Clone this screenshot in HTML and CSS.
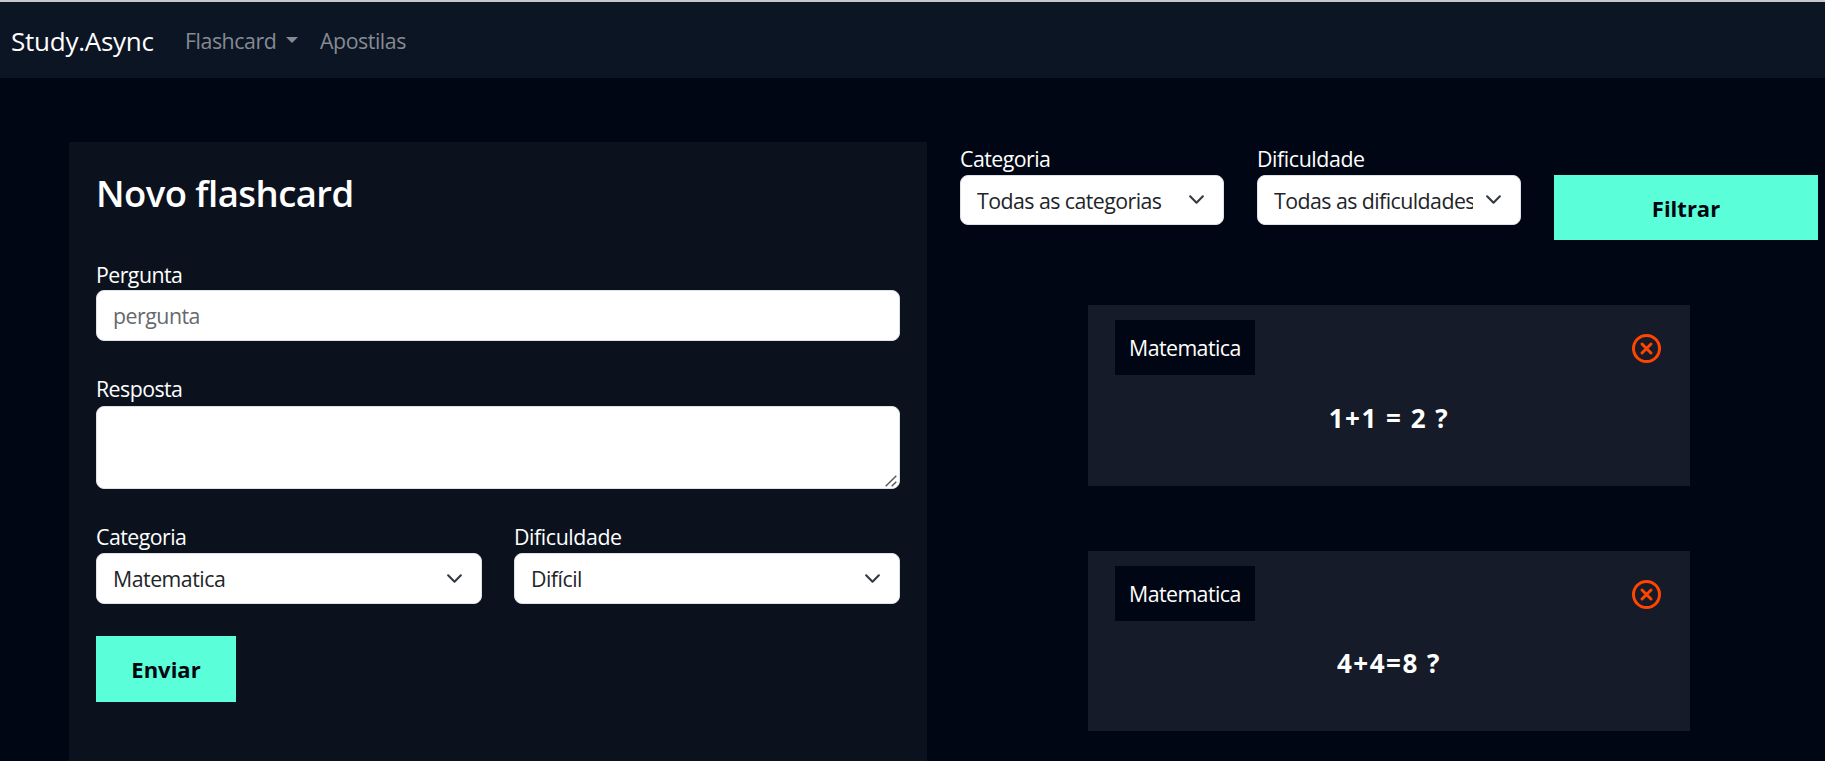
FILE: index.html
```html
<!DOCTYPE html>
<html lang="pt-BR">
<head>
<meta charset="utf-8">
<title>Study.Async</title>
<link rel="stylesheet" href="styles.css">
</head>
<body>
<nav class="navbar">
  <a class="brand"><span>Study.Async</span></a>
  <a class="nav-link flash"><span>Flashcard</span><i class="caret"></i></a>
  <a class="nav-link"><span>Apostilas</span></a>
</nav>
<main class="layout">
  <form class="panel">
    <h2 class="title">Novo flashcard</h2>
    <div class="field question">
      <label class="label">Pergunta</label>
      <input class="control" placeholder="pergunta">
    </div>
    <div class="field answer">
      <label class="label">Resposta</label>
      <div class="control area"><svg class="grip" width="12" height="12" viewBox="0 0 12 12"><path d="M.7 11.3 11.3.7M6.7 11.3l4.6-4.6"/></svg></div>
    </div>
    <div class="pair">
      <div class="field">
        <label class="label">Categoria</label>
        <div class="control select"><span class="value mat">Matematica</span><svg class="chevron" viewBox="0 0 16 16"><path d="m2 5 6 6 6-6"/></svg></div>
      </div>
      <div class="field">
        <label class="label dif">Dificuldade</label>
        <div class="control select"><span class="value">Difícil</span><svg class="chevron" viewBox="0 0 16 16"><path d="m2 5 6 6 6-6"/></svg></div>
      </div>
    </div>
    <button class="btn send" type="button">Enviar</button>
  </form>
  <section class="side">
    <form class="filters">
      <div class="field">
        <label class="label">Categoria</label>
        <div class="control select short"><span class="value all">Todas as categorias</span><svg class="chevron" viewBox="0 0 16 16"><path d="m2 5 6 6 6-6"/></svg></div>
      </div>
      <div class="field">
        <label class="label dif">Dificuldade</label>
        <div class="control select short"><span class="value all">Todas as dificuldades</span><svg class="chevron" viewBox="0 0 16 16"><path d="m2 5 6 6 6-6"/></svg></div>
      </div>
      <button class="btn filter" type="button">Filtrar</button>
    </form>
    <div class="cards">
      <article class="card">
        <div class="card-head"><span class="badge">Matematica</span>
          <svg class="remove" viewBox="0 0 29 29"><circle cx="14.5" cy="14.5" r="13"/><path d="m10 10 9 9m0-9-9 9"/></svg></div>
        <p class="ask">1+1 = 2 ?</p>
      </article>
      <article class="card second">
        <div class="card-head"><span class="badge">Matematica</span>
          <svg class="remove" viewBox="0 0 29 29"><circle cx="14.5" cy="14.5" r="13"/><path d="m10 10 9 9m0-9-9 9"/></svg></div>
        <p class="ask">4+4=8 ?</p>
      </article>
    </div>
  </section>
</main>
</body>
</html>
```
FILE: styles.css
```css
* { box-sizing: border-box; }
html, body { height: 100%; }
body {
  margin: 0;
  background: #000614;
  color: #fff;
  font: 400 21.33px/32px "Open Sans", "Noto Sans", sans-serif;
  overflow: hidden;
}
.navbar {
  display: flex;
  align-items: center;
  height: 78px;
  padding: 2px 0 0 11px;
  border-top: 2px solid #c8c8cc;
  background: #0c1524;
}
.brand { width: 174px; font-size: 26px; letter-spacing: -0.25px; }
.nav-link { color: #868a92; letter-spacing: -0.45px; }
.flash { display: flex; align-items: center; width: 135px; }
.caret {
  margin: -3px 0 0 10px;
  border: 6px solid transparent;
  border-top-color: currentColor;
  border-bottom: 0;
}
.layout { display: flex; gap: 33px; padding: 64px 0 0 69px; }
.panel { width: 858px; height: 640px; padding: 27px; background: #0b121e; }
.title { margin: 0 0 42px; font-size: 36.5px; font-weight: 600; line-height: 48px; letter-spacing: -0.55px; }
.field { min-width: 0; }
.label { display: block; height: 32px; line-height: 32px; letter-spacing: -0.55px; white-space: nowrap; }
.dif { letter-spacing: -0.4px; }
.question { margin-bottom: 32px; }
.question .label { margin-bottom: -1px; }
.answer { margin-bottom: 32px; }
.answer .label { height: 33px; }
.control {
  display: block;
  width: 100%;
  height: 51px;
  padding: 0 16px;
  border: 1px solid #dee2e6;
  border-radius: 8px;
  background: #fff;
  color: #212529;
  font: inherit;
  letter-spacing: -0.5px;
}
.control::placeholder { color: #65696d; opacity: 1; }
.area { display: flex; align-items: flex-end; justify-content: flex-end; height: 83px; padding: 0 2px 1px 0; }
.grip { fill: none; stroke: #555; stroke-width: 1.4; }
.pair { display: grid; grid-template-columns: 386px 386px; gap: 32px; }
.select { display: flex; align-items: center; justify-content: space-between; padding: 1px 18px 0 16px; }
.short { height: 50px; padding-top: 2px; }
.value { overflow: hidden; white-space: nowrap; }
.all { width: 199px; letter-spacing: -0.55px; }
.chevron { flex: none; width: 17px; height: 17px; margin-top: -2px; fill: none; stroke: #343a40; stroke-width: 2; stroke-linecap: round; stroke-linejoin: round; }
.short .chevron { margin-top: -3px; }
.btn {
  border: 0;
  padding: 0;
  background: #5affd9;
  color: #000610;
  font: 700 22px/32px "Open Sans", "Noto Sans", sans-serif;
}
.send { width: 140px; height: 66px; margin-top: 32px; }
.filters { display: grid; grid-template-columns: repeat(3, 264px); gap: 33px; padding-top: 1px; align-items: end; height: 98px; }
.filters .field { height: 97px; }
.filter { height: 65px; }
.cards { display: flex; flex-direction: column; gap: 65px; width: 602px; margin: 65px 0 0 128px; }
.card { height: 181px; padding: 15px 29px 0 27px; background: #151b28; }
.second { height: 180px; }
.card-head { display: flex; align-items: center; justify-content: space-between; height: 55px; }
.badge { width: 140px; height: 55px; padding: 0 14px; background: #000614; line-height: 55px; letter-spacing: -0.55px; }
.remove { width: 29px; height: 29px; margin-top: 1px; fill: none; stroke: #ff4500; stroke-width: 3; stroke-linecap: round; }
.ask { margin: 27px 0 0 2px; text-align: center; font-size: 26px; font-weight: 700; line-height: 32px; letter-spacing: 1.5px; }
.second .ask { margin-top: 26px; }
```
